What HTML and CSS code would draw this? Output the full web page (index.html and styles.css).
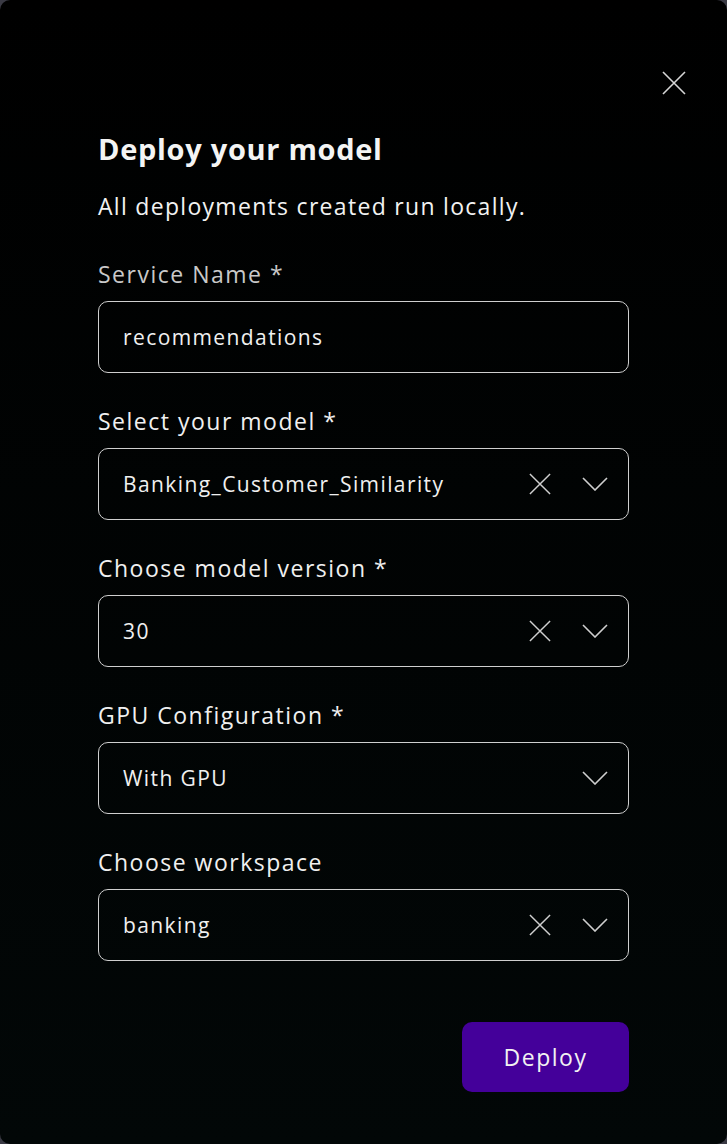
FILE: index.html
```html
<!DOCTYPE html>
<html lang="en">
<head>
<meta charset="utf-8">
<title>Deploy your model</title>
<link rel="stylesheet" href="styles.css">
</head>
<body>
<div class="modal">
  <button class="close" aria-label="Close">
    <svg width="24" height="24" viewBox="0 0 24 24"><path d="M1 1L23 23M23 1L1 23" stroke="#d6d6d6" stroke-width="1.6" fill="none"/></svg>
  </button>
  <h1 class="title">Deploy your model</h1>
  <p class="subtitle">All deployments created run locally.</p>

  <div class="field">
    <label class="label label-muted">Service Name *</label>
    <div class="box"><span class="value">recommendations</span></div>
  </div>

  <div class="field">
    <label class="label">Select your model *</label>
    <div class="box">
      <span class="value">Banking_Customer_Similarity</span>
      <span class="icons">
        <svg class="x" width="24" height="24" viewBox="0 0 24 24"><path d="M1 1L23 23M23 1L1 23" stroke="#cfcfcf" stroke-width="1.6" fill="none"/></svg>
        <svg class="chev" width="26" height="14" viewBox="0 0 26 14"><path d="M1 1L13 13L25 1" stroke="#cfcfcf" stroke-width="1.6" fill="none"/></svg>
      </span>
    </div>
  </div>

  <div class="field">
    <label class="label">Choose model version *</label>
    <div class="box">
      <span class="value">30</span>
      <span class="icons">
        <svg class="x" width="24" height="24" viewBox="0 0 24 24"><path d="M1 1L23 23M23 1L1 23" stroke="#cfcfcf" stroke-width="1.6" fill="none"/></svg>
        <svg class="chev" width="26" height="14" viewBox="0 0 26 14"><path d="M1 1L13 13L25 1" stroke="#cfcfcf" stroke-width="1.6" fill="none"/></svg>
      </span>
    </div>
  </div>

  <div class="field">
    <label class="label">GPU Configuration *</label>
    <div class="box">
      <span class="value">With GPU</span>
      <span class="icons">
        <svg class="chev" width="26" height="14" viewBox="0 0 26 14"><path d="M1 1L13 13L25 1" stroke="#cfcfcf" stroke-width="1.6" fill="none"/></svg>
      </span>
    </div>
  </div>

  <div class="field">
    <label class="label">Choose workspace</label>
    <div class="box">
      <span class="value">banking</span>
      <span class="icons">
        <svg class="x" width="24" height="24" viewBox="0 0 24 24"><path d="M1 1L23 23M23 1L1 23" stroke="#cfcfcf" stroke-width="1.6" fill="none"/></svg>
        <svg class="chev" width="26" height="14" viewBox="0 0 26 14"><path d="M1 1L13 13L25 1" stroke="#cfcfcf" stroke-width="1.6" fill="none"/></svg>
      </span>
    </div>
  </div>

  <div class="actions">
    <button class="deploy">Deploy</button>
  </div>
</div>
</body>
</html>
```

FILE: styles.css
```css
* { box-sizing: border-box; }
html, body { margin: 0; padding: 0; }
body {
  background: #3a3a44;
  font-family: "Open Sans", "Noto Sans", sans-serif;
  color: #f2f2f2;
}
.modal {
  position: relative;
  width: 727px;
  height: 1144px;
  border-radius: 10px;
  background: linear-gradient(180deg, #000000 0%, #020707 100%);
  padding: 129px 98px 0 98px;
  display: flex;
  flex-direction: column;
}
.close {
  position: absolute;
  top: 71px;
  left: 662px;
  width: 24px;
  height: 24px;
  padding: 0;
  border: none;
  background: none;
  display: block;
}
.close svg { display: block; }
.title {
  margin: 0;
  font-size: 29px;
  font-weight: 700;
  line-height: 40px;
  letter-spacing: 0.7px;
  color: #f4f4f4;
}
.subtitle {
  margin: 17px 0 0 0;
  font-size: 23px;
  line-height: 40px;
  letter-spacing: 1.3px;
  color: #f2f2f2;
}
.field {
  display: flex;
  flex-direction: column;
  margin-top: 29px;
}
.label {
  font-size: 23px;
  line-height: 38px;
  letter-spacing: 1.5px;
  color: #f0f0f0;
}
.label-muted { color: #c9c9c9; }
.box {
  margin-top: 8px;
  height: 72px;
  border: 1px solid #cfcfcf;
  border-radius: 10px;
  display: flex;
  align-items: center;
  padding: 0 20px 0 24px;
}
.value {
  flex: 1;
  font-size: 21px;
  letter-spacing: 1.4px;
  color: #f0f0f0;
}
.icons {
  display: flex;
  align-items: center;
  gap: 31px;
}
.icons svg { display: block; }
.x { width: 22px; height: 22px; }
.actions {
  display: flex;
  justify-content: flex-end;
  margin-top: 61px;
}
.deploy {
  width: 167px;
  height: 70px;
  border: none;
  border-radius: 10px;
  background: #44009a;
  color: #f2f2f2;
  font-family: "Open Sans", "Noto Sans", sans-serif;
  font-size: 23px;
  letter-spacing: 1.5px;
}
```
